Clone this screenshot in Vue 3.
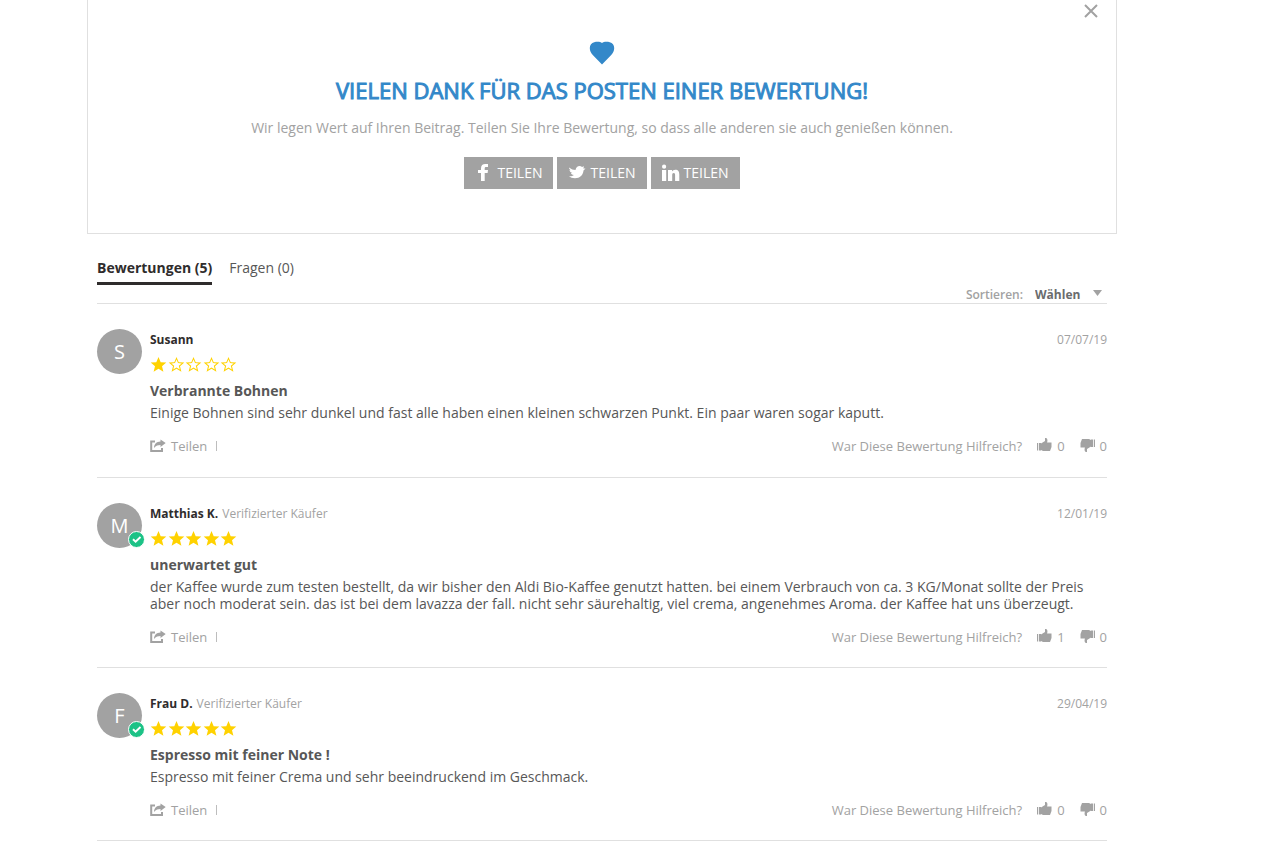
<template>
  <main class="widget">
    <section class="thanks">
      <button class="close" type="button" aria-label="Schließen">
        <svg viewBox="0 0 14 14" width="14" height="14">
          <path d="M1 1l12 12M13 1L1 13" fill="none" stroke="currentColor" stroke-width="2" />
        </svg>
      </button>
      <svg class="heart" viewBox="0 0 26 24" width="26" height="24">
        <path
          d="M13 2C11.500.6 8 .4 5.200 1.200 2.500 2 .8 4 .8 7c0 3 1 4.800 3.200 7.200L13 23.500l9-9.300C24.200 11.800 25.200 10 25.200 7c0-3-1.700-5-4.400-5.800C18 .4 14.500.6 13 2z"
          fill="currentColor"
        />
      </svg>
      <h2>VIELEN DANK FÜR DAS POSTEN EINER BEWERTUNG!</h2>
      <p>Wir legen Wert auf Ihren Beitrag. Teilen Sie Ihre Bewertung, so dass alle anderen sie auch genießen können.</p>
      <div class="networks">
        <button v-for="network in networks" :key="network.name" type="button" :aria-label="`TEILEN ${network.name}`">
          <svg viewBox="0 0 18 18" width="18" height="18">
            <path :d="network.icon" fill="currentColor" />
          </svg>
          <span>TEILEN</span>
        </button>
      </div>
    </section>

    <div class="content">
      <nav class="tabs">
        <button class="tab active" type="button">Bewertungen (5)</button>
        <button class="tab" type="button">Fragen (0)</button>
      </nav>

      <div class="sorting">
        <label for="sort">Sortieren:</label>
        <div class="select">
          <select id="sort" v-model="sort">
            <option>Wählen</option>
            <option>Neueste</option>
          </select>
          <svg viewBox="0 0 9 6" width="9" height="6">
            <path d="M0 0h9L4.500 6z" fill="currentColor" />
          </svg>
        </div>
      </div>

      <article v-for="review in reviews" :key="review.name" class="review">
        <div class="avatar">
          {{ review.name[0] }}
          <svg v-if="review.verified" class="badge" viewBox="0 0 17 17" width="17" height="17">
            <circle cx="8.500" cy="8.500" r="8" fill="#1cc286" stroke="#fff" />
            <path d="M5 8.300l2.600 2.400L12.500 6" fill="none" stroke="#fff" stroke-width="1.900" />
          </svg>
        </div>
        <div class="body">
          <header>
            <strong>{{ review.name }}</strong>
            <span v-if="review.verified" class="verified">Verifizierter Käufer</span>
            <time>{{ review.date }}</time>
          </header>
          <div class="stars" role="img" :aria-label="`${review.stars} / 5`">
            <svg v-for="n in 5" :key="n" viewBox="0 0 17 15" width="17" height="15">
              <path :d="n <= review.stars ? star : star + starInner" fill="currentColor" fill-rule="evenodd" />
            </svg>
          </div>
          <h3>{{ review.title }}</h3>
          <p>{{ review.text }}</p>
          <footer>
            <button class="share" type="button">
              <svg viewBox="0 0 16 14" width="16" height="14">
                <path d="M5 2.500H1.200V12H12V9" fill="none" stroke="currentColor" stroke-width="2" />
                <path d="M10.500.5L15.700 4l-5.200 4V6C8 6 6 6.600 4 9c.2-4 2.400-6.200 6.500-6.400z" fill="currentColor" />
              </svg>
              Teilen
            </button>
            <span class="divider"></span>
            <span class="helpful">War Diese Bewertung Hilfreich?</span>
            <button class="vote" type="button" aria-label="Hilfreich">
              <svg viewBox="0 0 15 14" width="15" height="14">
                <path :d="thumb" fill="currentColor" />
              </svg>
              {{ review.up }}
            </button>
            <button class="vote" type="button" aria-label="Nicht hilfreich">
              <svg viewBox="0 0 15 14" width="15" height="14">
                <path :d="thumb" fill="currentColor" transform="rotate(180 7.5 7)" />
              </svg>
              {{ review.down }}
            </button>
          </footer>
        </div>
      </article>
    </div>
  </main>
</template>

<script setup>
import { ref } from 'vue';

const sort = ref('Wählen');

const networks = [
  {
    name: 'Facebook',
    icon: 'M6 17V9H3V6h3V4.500C6 1.400 7.600 0 10.300 0H13v3h-1.600C10.200 3 9.700 3.500 9.700 4.400V6H13l-.4 3h-2.900v8z',
  },
  {
    name: 'Twitter',
    icon: 'M1 3.500c2.200 1.700 4.200 2.500 6.500 2.500C8 3.500 9.600 2 11.500 2c1 0 1.900.4 2.500 1.100l2-.8-.7 2.100 2.200.2-2 1.900C15.200 11 12 14.200 7 14.200c-2.600 0-4.600-.7-6-1.900 2 .2 3.700-.3 4.900-1.200-1.600-.2-2.600-1-3-2.100h1.400C2.800 8.500 1.700 7.500 1.500 6l1.400.2C1.700 5.500 1 4.600 1 3.500z',
  },
  {
    name: 'LinkedIn',
    icon: 'M0 6h4.200v11H0zM2.100.6a2.100 2.100 0 1 1 0 4.200 2.100 2.100 0 0 1 0-4.200zM6 6h4v1.500C10.700 6.500 11.800 5.800 13.300 5.800c3 0 4 2 4 4.700V17h-4.200v-5.800c0-1.400-.3-2.100-1.400-2.100s-1.500.8-1.500 2.200V17H6z',
  },
];

const star = 'M8.500 0l2.200 5.200 5.600.4-4.300 3.700 1.400 5.500-4.900-3-4.900 3L5 9.300.7 5.600l5.600-.4z';
const starInner = 'M8.500 2.600L7 6.100l-3.700.3 2.900 2.400-1 3.800 3.300-2.100 3.300 2.100-1-3.800 2.900-2.400L10 6.100z';
const thumb = 'M0 5h1.200v7.500H0zM2 5H4v7.500H2zM4 5.500L8 3V0h1.200c1.400.8 1.500 2.500.9 4.500H14.500v4.500L13 13H6L4 12z';

const reviews = [
  {
    name: 'Susann',
    verified: false,
    date: '07/07/19',
    stars: 1,
    title: 'Verbrannte Bohnen',
    text: 'Einige Bohnen sind sehr dunkel und fast alle haben einen kleinen schwarzen Punkt. Ein paar waren sogar kaputt.',
    up: 0,
    down: 0,
  },
  {
    name: 'Matthias K.',
    verified: true,
    date: '12/01/19',
    stars: 5,
    title: 'unerwartet gut',
    text: 'der Kaffee wurde zum testen bestellt, da wir bisher den Aldi Bio-Kaffee genutzt hatten. bei einem Verbrauch von ca. 3 KG/Monat sollte der Preis aber noch moderat sein. das ist bei dem lavazza der fall. nicht sehr säurehaltig, viel crema, angenehmes Aroma. der Kaffee hat uns überzeugt.',
    up: 1,
    down: 0,
  },
  {
    name: 'Frau D.',
    verified: true,
    date: '29/04/19',
    stars: 5,
    title: 'Espresso mit feiner Note !',
    text: 'Espresso mit feiner Crema und sehr beeindruckend im Geschmack.',
    up: 0,
    down: 0,
  },
];
</script>

<style>
body {
  background: #fff;
}
</style>

<style scoped>
.widget {
  margin: 0 150px 0 87px;
  font-family: 'Open Sans', sans-serif;
  font-size: 14px;
  color: #575757;
}

button,
select {
  padding: 0;
  border: 0;
  background: none;
  font: inherit;
  color: inherit;
  cursor: pointer;
}

h2,
h3,
p {
  margin: 0;
}

svg {
  display: block;
  flex: none;
}

.thanks {
  position: relative;
  display: flex;
  flex-direction: column;
  align-items: center;
  padding: 41px 10px 44px;
  border: 1px solid #e0e0e0;
  border-top: 0;
  color: #a2a2a2;
}

.close {
  position: absolute;
  top: 4px;
  right: 18px;
}

.heart {
  color: #3388c9;
}

.thanks h2 {
  margin-top: 10px;
  font-size: 22px;
  font-weight: 400;
  line-height: 30px;
  color: #3388c9;
  -webkit-text-stroke: 1px #3388c9;
}

.thanks p {
  margin-top: 13px;
  line-height: 20px;
}

.networks {
  display: flex;
  gap: 4px;
  margin-top: 19px;
}

.networks button {
  display: flex;
  align-items: center;
  gap: 4px;
  height: 32px;
  padding: 0 11px 1px;
  background: #a2a2a2;
  color: #fff;
}

.content {
  padding: 0 10px;
}

.tabs {
  display: flex;
  gap: 17px;
  padding-top: 24px;
}

.tab {
  height: 27px;
  padding-bottom: 4px;
  border-bottom: 3px solid transparent;
  line-height: 20px;
}

.tab.active {
  border-color: #2f2c2c;
  font-weight: 700;
  color: #2f2c2c;
}

.sorting {
  display: flex;
  justify-content: flex-end;
  gap: 12px;
  padding-top: 1px;
  border-bottom: 1px solid #e0e0e0;
  font-size: 12px;
  line-height: 17px;
  color: #a2a2a2;
}

.sorting label {
  font-weight: 600;
}

.select {
  display: flex;
  align-items: center;
}

.sorting select {
  width: 58px;
  appearance: none;
  font-weight: 700;
  color: #6a6c6d;
}

.select svg {
  margin: 0 5px 4px 0;
}

.review {
  display: flex;
  gap: 8px;
  padding: 25px 0 21px;
  border-bottom: 1px solid #e0e0e0;
}

.review + .review {
  padding-bottom: 20px;
}

.avatar {
  position: relative;
  flex: none;
  width: 45px;
  height: 45px;
  border-radius: 50%;
  background: #a2a2a2;
  font-size: 20px;
  line-height: 45px;
  text-align: center;
  color: #fff;
}

.badge {
  position: absolute;
  right: -3px;
  bottom: 0;
}

.body {
  flex: 1;
}

header {
  display: flex;
  gap: 4px;
  font-size: 12px;
  line-height: 22px;
}

header strong {
  color: #2f2c2c;
}

.verified,
time {
  color: #a2a2a2;
}

time {
  margin-left: auto;
}

.stars {
  display: flex;
  justify-content: space-between;
  width: 87px;
  margin-top: 6px;
  color: #ffd200;
}

h3 {
  margin-top: 9px;
  font-size: 14px;
  line-height: 20px;
}

.body p {
  margin-top: 3px;
  line-height: 17px;
}

footer {
  display: flex;
  align-items: center;
  margin-top: 15px;
  font-size: 13px;
  line-height: 20px;
  color: #a2a2a2;
}

.share,
.vote {
  display: flex;
  align-items: center;
  gap: 5px;
}

.divider {
  height: 10px;
  margin-left: 9px;
  border-left: 1px solid #bdbdbd;
}

.helpful {
  margin-left: auto;
}

.vote {
  margin-left: 15px;
}

.vote svg {
  margin-bottom: 2px;
}
</style>
